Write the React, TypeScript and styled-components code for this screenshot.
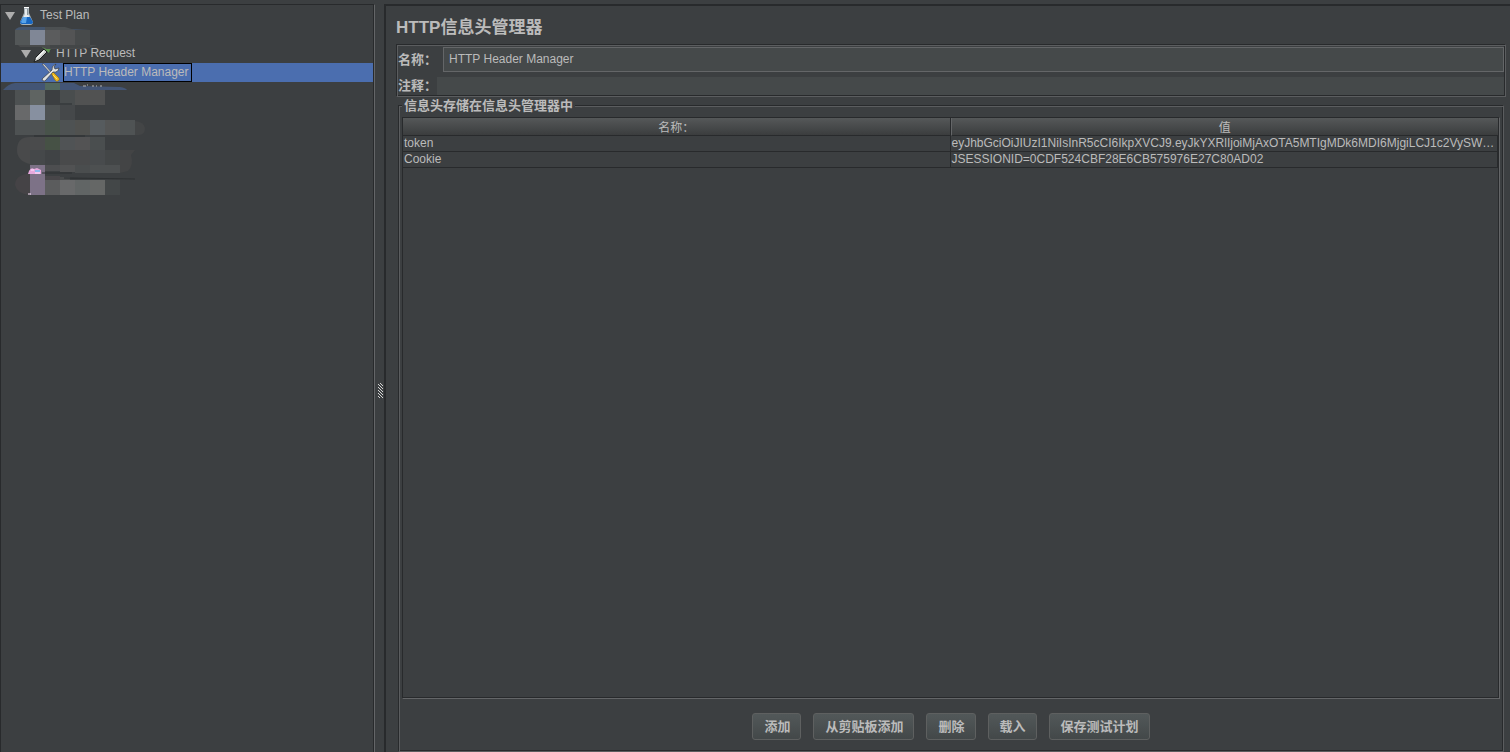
import React from 'react';
import styled, { createGlobalStyle } from 'styled-components';

const color = {
  bg: '#3c3f41',
  dark: '#282a2c',
  light: '#646668',
  etch: '#5b5d5f',
  field: '#45494a',
  text: '#bbbbbb',
  select: '#4b6eaf',
};

const GlobalStyle = createGlobalStyle`
  * { box-sizing: border-box; }
  body {
    margin: 0;
    background: ${color.bg};
    color: ${color.text};
    font: 12px/16px "Liberation Sans", "Noto Sans CJK SC", sans-serif;
  }
`;

const Window = styled.div`
  display: flex;
  min-height: 100vh;
  padding-top: 4px;
`;

const TreePanel = styled.nav`
  position: relative;
  flex: 0 0 375px;
  padding: 1px 1px 0 0;
  border: 1px solid ${color.dark};
  border-right-color: ${color.light};
  border-bottom: 0;
  box-shadow: inset -1px 0 ${color.dark};
`;

const Tree = styled.ul`
  margin: 0;
  padding: 0;
  list-style: none;
`;

const TreeRow = styled.li<{ $indent: number; $selected?: boolean }>`
  display: flex;
  align-items: center;
  height: 19px;
  padding-left: ${p => p.$indent}px;
  background: ${p => (p.$selected ? color.select : 'transparent')};
`;

const Arrow = styled.svg`
  width: 10px;
  height: 10px;
  margin: 1px 2px 0 0;
`;

const NodeIcon = styled.svg`
  width: 19px;
  height: 19px;
  margin-right: 3px;
`;

const NodeLabel = styled.span<{ $focused?: boolean }>`
  height: 19px;
  line-height: 17px;
  padding-right: 2px;
  border: 1px solid ${p => (p.$focused ? '#000' : 'transparent')};
`;

const Mosaic = styled.svg`
  position: absolute;
  top: 0;
  left: 0;
  pointer-events: none;
`;

const Splitter = styled.div`
  display: flex;
  align-items: center;
  justify-content: center;
  flex: 0 0 9px;
  padding: 26px 0 0 2px;
`;

const Editor = styled.main`
  display: flex;
  flex: 1;
  flex-direction: column;
  min-width: 0;
  padding: 10px 4px 0 10px;
  border: solid ${color.dark};
  border-width: 2px 0 0 2px;
`;

const Title = styled.h1`
  margin: 0 0 4px;
  font-size: 17px;
  line-height: 24px;
`;

const NameBox = styled.div`
  display: flex;
  flex-direction: column;
  gap: 5px;
  margin-bottom: 1px;
  padding: 2px 1px 1px;
  border: 1px solid;
  border-color: ${color.dark} ${color.etch} ${color.etch} ${color.dark};
  box-shadow: inset 1px 1px ${color.etch}, inset -1px -1px ${color.dark};
`;

const Field = styled.div`
  display: flex;
  align-items: center;
`;

const FieldLabel = styled.label`
  flex: 0 0 39px;
  font-size: 13px;
  line-height: 18px;
  font-weight: bold;
  white-space: nowrap;
`;

const TextInput = styled.input<{ $framed?: boolean }>`
  flex: 1;
  min-width: 0;
  height: ${p => (p.$framed ? 25 : 18)}px;
  margin: 0 0 0 ${p => (p.$framed ? 6 : 0)}px;
  padding: 0 5px 2px;
  border: ${p => (p.$framed ? 1 : 0)}px solid ${color.light};
  background: ${color.field};
  color: inherit;
  font: inherit;
  outline: none;
`;

const Group = styled.fieldset`
  display: flex;
  flex: 1;
  flex-direction: column;
  min-width: 0;
  margin: 0 2px;
  padding: 4px 3px 11px;
  border: 1px solid;
  border-color: ${color.dark} ${color.etch} ${color.etch} ${color.dark};
  box-shadow: inset 1px 1px ${color.etch}, inset -1px -1px ${color.dark};
`;

const GroupTitle = styled.legend`
  padding: 0 2px;
  background: ${color.bg};
  font-size: 13px;
  line-height: 15px;
  font-weight: bold;
`;

const TableFrame = styled.div`
  flex: 1;
  padding: 0 1px 1px 0;
  border: 1px solid;
  border-color: ${color.dark} ${color.light} ${color.light} ${color.dark};
  box-shadow: inset -1px -1px ${color.dark};
`;

const HeaderTable = styled.table`
  width: 100%;
  table-layout: fixed;
  border-spacing: 0;
`;

const HeadCell = styled.th`
  height: 18px;
  padding: 3px 0 0;
  border-bottom: 1px solid ${color.dark};
  background: linear-gradient(#555859, #3b3d3e);
  font-weight: normal;
  line-height: 14px;

  & + & {
    border-left: 1px solid ${color.light};
  }
  &:first-child {
    border-right: 1px solid ${color.dark};
  }
`;

const Cell = styled.td`
  height: 16px;
  padding: 0 0 0 1px;
  overflow: hidden;
  border: solid ${color.dark};
  border-width: 0 1px 1px 0;
  line-height: 15px;
  text-overflow: ellipsis;
  white-space: nowrap;
`;

const Actions = styled.div`
  display: flex;
  justify-content: center;
  gap: 12px;
  margin-top: 14px;
`;

const ActionButton = styled.button`
  height: 27px;
  padding: 0 10px 0 11px;
  border: 1px solid #5e6060;
  border-radius: 3px;
  background: linear-gradient(#525859, #434849);
  color: inherit;
  font: bold 13px/20px "Liberation Sans", "Noto Sans CJK SC", sans-serif;
`;

const Expanded = () => (
  <Arrow viewBox="0 0 10 10" aria-hidden="true">
    <path d="M0 1h10L5 9z" fill="#adadad" />
  </Arrow>
);

const FlaskIcon = () => (
  <NodeIcon viewBox="0 0 19 19" aria-hidden="true">
    <path d="M7 2h5v5l4 9q0 3-3 3H6q-3 0-3-3l4-9z" fill="#a9b3b8" />
    <path d="M8 3h3v5l2 4H6l2-4z" fill="#e6ebed" />
    <path d="M10 3h1v6h-1z" fill="#8b979d" />
    <path d="M6 11h7l3 5q0 2-3 2H6q-3 0-3-2z" fill="#1767c2" />
    <path d="M6 11h4l-1 6H5l-1-1z" fill="#58a4ea" />
    <path d="M7 1h5v1H7z" fill="#fff" />
  </NodeIcon>
);

const DropperIcon = () => (
  <NodeIcon viewBox="0 0 19 19" aria-hidden="true">
    <path d="M1 18l2-5 8-8 3 3-8 8z" fill="#c9ccca" stroke="#1d1f20" />
    <path d="M3 15l8-8" stroke="#f4f5f4" strokeWidth="1.4" />
    <path d="M9 3l7 6 1-3 2-2q0-3-3-4l-3 1-2 2z" fill="#5e9650" />
    <path d="M12 4l3-2" stroke="#a3cf92" strokeWidth="2" />
  </NodeIcon>
);

const ToolsIcon = () => (
  <NodeIcon viewBox="0 0 19 19" aria-hidden="true">
    <path d="M1 1l2 0 8 9-1 1z" fill="#dedede" stroke="#37393b" strokeWidth=".5" />
    <path d="M10 10l2-1 6 6q1 2-1 3t-3-1z" fill="#f0b91e" stroke="#8a6612" strokeWidth=".6" />
    <path d="M12 12l4 4" stroke="#ffe06c" />
    <path d="M1 16L11 7q-1-4 4-6l-2 3 1 2 4-1q-1 5-6 4L4 18q-2 1-3-2z" fill="#dfe1e1" stroke="#33373a" strokeWidth=".7" />
  </NodeIcon>
);

/* Tiles hiding the private tree entries: x, y, width, height, fill. */
const tiles: [number, number, number, number, string][] = [
  [15, 30, 15, 15, '#535758'], [30, 30, 15, 15, '#808796'], [45, 30, 15, 15, '#5b5c5d'],
  [60, 30, 15, 15, '#535455'], [75, 30, 15, 15, '#474a4b'],
  [15, 90, 15, 15, '#4d5152'], [30, 90, 15, 15, '#5f6462'], [60, 90, 15, 15, '#494d4e'],
  [75, 90, 30, 15, '#515252'],
  [15, 105, 15, 15, '#68696a'], [30, 105, 15, 15, '#8790a0'], [45, 105, 15, 15, '#4e5253'],
  [60, 105, 15, 15, '#45484a'],
  [15, 120, 30, 15, '#4e5253'], [45, 120, 15, 15, '#48534a'], [60, 120, 15, 15, '#4e5253'],
  [75, 120, 15, 15, '#50514f'], [90, 120, 15, 15, '#565b5e'], [105, 120, 15, 15, '#545555'],
  [120, 120, 15, 15, '#4f5354'],
  [30, 137, 15, 13, '#4a4b4c'], [45, 137, 15, 13, '#465145'], [60, 137, 15, 13, '#505355'],
  [75, 137, 15, 13, '#535354'], [90, 137, 15, 13, '#4a4e4f'],
  [30, 150, 15, 15, '#45484a'], [45, 150, 15, 15, '#404345'], [60, 150, 30, 15, '#494a4b'],
  [90, 150, 15, 15, '#484b4d'], [105, 150, 15, 15, '#434647'],
  [30, 165, 15, 30, '#7d7287'], [45, 165, 15, 6, '#4d4e50'], [60, 165, 15, 7, '#515253'],
  [75, 165, 15, 8, '#4a4d4e'], [90, 165, 30, 8, '#4d5051'],
  [45, 176, 15, 4, '#484649'], [60, 177, 10, 3, '#494b4c'],
  [45, 180, 15, 15, '#5b5c5d'], [60, 180, 15, 15, '#68696a'], [75, 180, 15, 15, '#616565'],
  [90, 180, 15, 15, '#656766'], [105, 180, 15, 15, '#434748'],
];

const RedactedNodes = () => (
  <Mosaic width="160" height="195" viewBox="1 5 160 195" aria-hidden="true">
    <path d="M15 30q3-4 12-3h32l10 2 21 1H15z" fill="#45566e" />
    <path d="M45 27h20l10 3H45z" fill="#4c5052" />
    <path d="M18 45h79l-14 4H46l-4-2H20z" fill="#494b4c" />
    <path d="M50 45h40v3H50z" fill="#434647" />
    <path d="M3 90q5-6 12-7h59l6 3 40 1q6 1 7 3z" fill="#435575" />
    <path d="M45 83h15v7H45z" fill="#52685f" />
    <path d="M83 86h3M87 85h1M93 85v2M96 86h1M101 85v2" stroke="#b4b4b4" />
    <path d="M135 121q9 1 10 7 0 7-6 7h-4z" fill="#434546" />
    <path d="M30 137q-13 0-13 13 0 11 13 14z" fill="#494a4b" />
    <path d="M120 150h15l-4 5q3 10-3 16l-8 2z" fill="#434445" />
    <path d="M30 173q-15 2-15 12 2 9 15 10z" fill="#454346" />
    {tiles.map(([x, y, width, height, fill]) => (
      <rect key={`${x}-${y}`} x={x} y={y} width={width} height={height} fill={fill} />
    ))}
    <path d="M34 136h51M60 104h12M42 173h30M64 178h8l63 1" stroke="#2d3032" />
    <path d="M29 171q2-4 5-2l3-1 4 2v4H28z" fill="#e6a9dd" />
    <path d="M31 170h3M35 173h5M28 194h3" stroke="#ffe6ff" />
    <path d="M35 171h5" stroke="#8db9ed" strokeWidth="2" />
  </Mosaic>
);

const Grip = () => (
  <svg width="5" height="16" viewBox="0 0 5 16" aria-hidden="true" shapeRendering="crispEdges">
    {[0, 3, 6, 9, 12].map(y => (
      <path key={y} d={`M2 ${y}h1v1h-1zM0 ${y + 1}h1v1h-1zM3 ${y + 1}h1v1h-1zM1 ${y + 2}h1v1h-1zM4 ${y + 2}h1v1h-1z`} fill="#d4d4d4" />
    ))}
  </svg>
);

const headers = [
  {
    name: 'token',
    value:
      'eyJhbGciOiJIUzI1NiIsInR5cCI6IkpXVCJ9.eyJkYXRlIjoiMjAxOTA5MTIgMDk6MDI6MjgiLCJ1c2VySWQi...',
  },
  { name: 'Cookie', value: 'JSESSIONID=0CDF524CBF28E6CB575976E27C80AD02' },
];

const actions = ['添加', '从剪贴板添加', '删除', '载入', '保存测试计划'];

export default function App() {
  return (
    <>
      <GlobalStyle />
      <Window>
        <TreePanel>
          <Tree>
            <TreeRow $indent={4}>
              <Expanded />
              <FlaskIcon />
              <NodeLabel>Test Plan</NodeLabel>
            </TreeRow>
            <TreeRow $indent={20} aria-hidden="true" />
            <TreeRow $indent={20}>
              <Expanded />
              <DropperIcon />
              <NodeLabel>HTTP Request</NodeLabel>
            </TreeRow>
            <TreeRow $indent={40} $selected aria-current="true">
              <ToolsIcon />
              <NodeLabel $focused>HTTP Header Manager</NodeLabel>
            </TreeRow>
          </Tree>
          <RedactedNodes />
        </TreePanel>
        <Splitter>
          <Grip />
        </Splitter>
        <Editor>
          <Title>HTTP信息头管理器</Title>
          <NameBox>
            <Field>
              <FieldLabel htmlFor="name">名称：</FieldLabel>
              <TextInput id="name" $framed defaultValue="HTTP Header Manager" />
            </Field>
            <Field>
              <FieldLabel htmlFor="comment">注释：</FieldLabel>
              <TextInput id="comment" />
            </Field>
          </NameBox>
          <Group>
            <GroupTitle>信息头存储在信息头管理器中</GroupTitle>
            <TableFrame>
              <HeaderTable>
                <thead>
                  <tr>
                    <HeadCell>名称：</HeadCell>
                    <HeadCell>值</HeadCell>
                  </tr>
                </thead>
                <tbody>
                  {headers.map(h => (
                    <tr key={h.name}>
                      <Cell>{h.name}</Cell>
                      <Cell>{h.value}</Cell>
                    </tr>
                  ))}
                </tbody>
              </HeaderTable>
            </TableFrame>
            <Actions>
              {actions.map(a => (
                <ActionButton key={a} type="button">{a}</ActionButton>
              ))}
            </Actions>
          </Group>
        </Editor>
      </Window>
    </>
  );
}
